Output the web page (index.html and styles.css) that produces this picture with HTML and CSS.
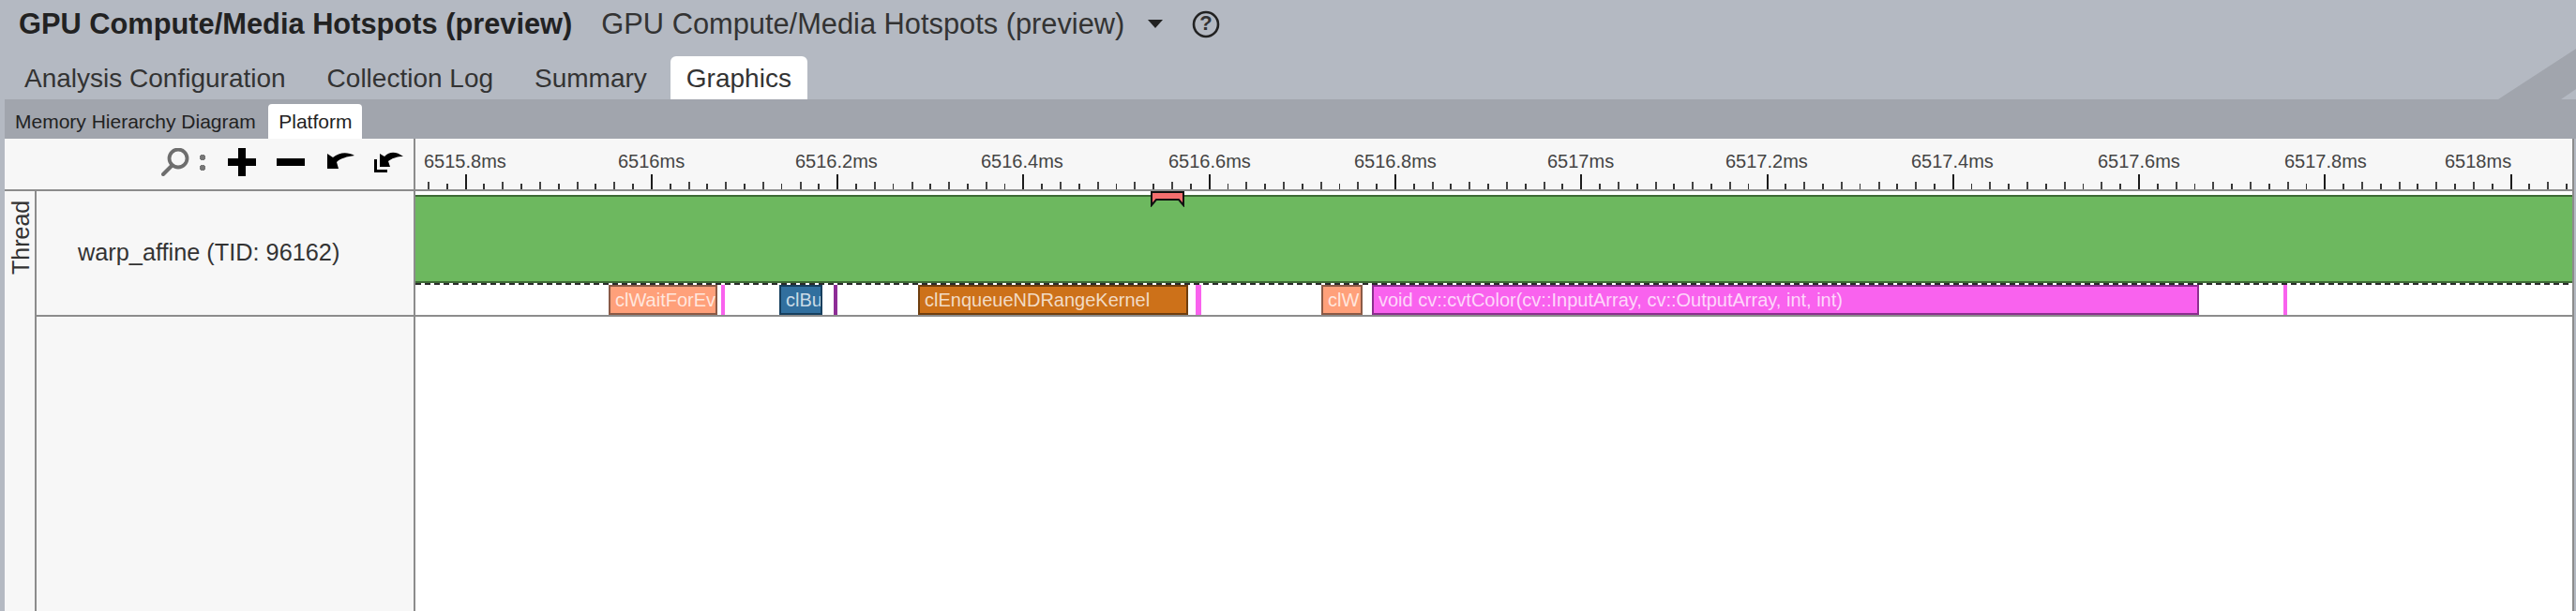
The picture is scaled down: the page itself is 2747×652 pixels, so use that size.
FILE: index.html
```html
<!DOCTYPE html>
<html lang="en">
<head>
    <meta charset="UTF-8">
    <title>GPU Compute/Media Hotspots (preview)</title>
    <link rel="stylesheet" href="styles.css">
</head>
<body>
    <header class="title-bar">
        <span class="title-main">GPU Compute/Media Hotspots (preview)</span>
        <span class="title-sub">GPU Compute/Media Hotspots (preview)</span>
        <svg class="caret" width="16" height="9" viewBox="0 0 16 9"><path d="M0 0H16L8 9Z"/></svg>
        <svg class="help" width="30" height="30" viewBox="0 0 30 30">
            <circle cx="15" cy="15" r="13" fill="none" stroke="#222" stroke-width="2.6"/>
            <text x="15" y="21" text-anchor="middle">?</text>
        </svg>
    </header>

    <nav class="main-tabs">
        <a class="main-tab">Analysis Configuration</a>
        <a class="main-tab">Collection Log</a>
        <a class="main-tab">Summary</a>
        <a class="main-tab active">Graphics</a>
        <svg class="corner" width="83" height="54" viewBox="0 0 83 54"><path d="M0 54L83 0V43L67 54Z"/></svg>
    </nav>

    <main class="workspace">
        <nav class="sub-tabs">
            <a class="sub-tab">Memory Hierarchy Diagram</a>
            <a class="sub-tab active">Platform</a>
        </nav>

        <div class="ruler-row">
            <div class="zoom-tools">
                <svg class="tool-search" width="30" height="30" viewBox="0 0 30 30">
                    <circle cx="18" cy="11" r="9.5" fill="none" stroke="#6e6e6e" stroke-width="3.8"/>
                    <path d="M11 19L2 28" stroke="#6e6e6e" stroke-width="4" stroke-linecap="round"/>
                </svg>
                <span class="tool-colon"></span>
                <svg class="tool-plus" width="30" height="30" viewBox="0 0 30 30"><path d="M11 0H19V11H30V19H19V30H11V19H0V11H11Z"/></svg>
                <svg class="tool-minus" width="30" height="10" viewBox="0 0 30 10"><path d="M0 1H30V9H0Z"/></svg>
                <svg class="tool-undo" width="29" height="18" viewBox="0 0 29 18"><path d="M0 2V18H12L10 11C14 7 21 5 29 4C22 0 13 0 6 6Z"/></svg>
                <svg class="tool-reset" width="31" height="22" viewBox="0 0 31 22"><path d="M6 2V16H17L15 10C19 7 24 5 31 5C24 0 17 -1 11 5Z"/><path d="M0 8H3V19H14V22H0Z"/></svg>
            </div>
            <div class="ruler">
                <span class="ruler-label" style="left: 9px">6515.8ms</span>
                <span class="ruler-label" style="left: 216px">6516ms</span>
                <span class="ruler-label" style="left: 405px">6516.2ms</span>
                <span class="ruler-label" style="left: 603px">6516.4ms</span>
                <span class="ruler-label" style="left: 803px">6516.6ms</span>
                <span class="ruler-label" style="left: 1001px">6516.8ms</span>
                <span class="ruler-label" style="left: 1207px">6517ms</span>
                <span class="ruler-label" style="left: 1397px">6517.2ms</span>
                <span class="ruler-label" style="left: 1595px">6517.4ms</span>
                <span class="ruler-label" style="left: 1794px">6517.6ms</span>
                <span class="ruler-label" style="left: 1993px">6517.8ms</span>
                <span class="ruler-label" style="left: 2164px">6518ms</span>
                <div class="ruler-ticks"></div>
            </div>
        </div>

        <div class="thread-area">
            <div class="group-label"><span>Thread</span></div>
            <div class="rows">
                <div class="thread-row">
                    <div class="thread-name">warp_affine (TID: 96162)</div>
                    <div class="timeline">
                        <svg class="marker" width="36" height="17" viewBox="0 0 36 17">
                            <path d="M1 1H35V15L30 9H6L1 15Z" fill="#f46f6f" stroke="#111" stroke-width="2"/>
                        </svg>
                        <div class="band"></div>
                        <div class="tasks">
                            <div class="task salmon" style="left: 206px; width: 116px">clWaitForEv</div>
                            <div class="tick-task pink" style="left: 326px; width: 4px"></div>
                            <div class="task blue" style="left: 388px; width: 46px">clBu</div>
                            <div class="tick-task purple" style="left: 446px; width: 4px"></div>
                            <div class="task orange" style="left: 536px; width: 288px">clEnqueueNDRangeKernel</div>
                            <div class="tick-task pink" style="left: 832px; width: 6px"></div>
                            <div class="task salmon" style="left: 966px; width: 44px">clW</div>
                            <div class="task magenta" style="left: 1020px; width: 882px">void cv::cvtColor(cv::InputArray, cv::OutputArray, int, int)</div>
                            <div class="tick-task pink" style="left: 1992px; width: 4px"></div>
                        </div>
                    </div>
                </div>
                <div class="empty-row">
                    <div class="empty-name"></div>
                    <div class="empty-timeline"></div>
                </div>
            </div>
        </div>
    </main>
</body>
</html>
```

FILE: styles.css
```css
html, body {
    height: 100%;
}
body {
    margin: 0;
    height: 652px;
    overflow: hidden;
    display: flex;
    flex-direction: column;
    background-color: #b4b9c2;
    font-family: "Liberation Sans", Arial, sans-serif;
    color: #2b2b2b;
}
.title-bar {
    height: 54px;
    box-sizing: border-box;
    display: flex;
    align-items: center;
    padding-left: 20px;
    padding-bottom: 3px;
}
.title-main {
    font-size: 30.8px;
    font-weight: bold;
    color: #222;
}
.title-sub {
    font-size: 30.8px;
    margin-left: 31px;
    color: #333;
}
.caret {
    margin-left: 25px;
    fill: #222;
}
.help {
    margin-left: 31px;
}
.help text {
    font-size: 22px;
    font-weight: bold;
    fill: #333;
}
.main-tabs {
    position: relative;
    height: 52px;
    display: flex;
    align-items: flex-end;
    gap: 10px;
    padding-left: 9px;
}
.main-tab {
    height: 46px;
    line-height: 48px;
    padding: 0 17px;
    font-size: 28px;
    border-radius: 6px 6px 0 0;
    color: #333;
}
.main-tab.active {
    margin-left: -2px;
    background-color: #fff;
}
.corner {
    position: absolute;
    right: 0;
    bottom: 0;
    fill: #a1a5ad;
}
.workspace {
    flex: 1;
    display: flex;
    flex-direction: column;
    margin-left: 5px;
    margin-right: 2px;
    min-height: 0;
}
.sub-tabs {
    height: 42px;
    display: flex;
    align-items: flex-end;
    gap: 2.5px;
    background-color: #a1a5ad;
    margin-right: -2px;
}
.sub-tab {
    height: 37px;
    line-height: 38px;
    padding: 0 11px;
    font-size: 21px;
    border-radius: 4px 4px 0 0;
    color: #222;
}
.sub-tab.active {
    background-color: #fff;
}
.ruler-row {
    height: 56px;
    display: flex;
    background-color: #f7f7f7;
    border-right: 2px solid #8c8c8c;
}
.zoom-tools {
    width: 438px;
    box-sizing: border-box;
    display: flex;
    align-items: center;
    justify-content: flex-end;
    padding-right: 11px;
    padding-bottom: 4px;
    border-bottom: 2px solid #8c8c8c;
    border-right: 2px solid #8c8c8c;
}
.tool-search {
    margin-right: 11px;
}
.tool-colon {
    width: 6px;
    height: 17px;
    margin-right: 24px;
    background: radial-gradient(circle, #777 3px, transparent 3.5px) 0 0 / 6px 6px no-repeat,
                radial-gradient(circle, #777 3px, transparent 3.5px) 0 11px / 6px 6px no-repeat;
}
.tool-minus {
    margin-left: 22px;
}
.tool-undo {
    margin-left: 24px;
    margin-bottom: 4px;
}
.tool-reset {
    margin-left: 21px;
}
.ruler {
    flex: 1;
    position: relative;
    border-bottom: 2px solid #8c8c8c;
}
.ruler-label {
    position: absolute;
    top: 12px;
    font-size: 20px;
    line-height: 24px;
    color: #444;
}
.ruler-ticks {
    position: absolute;
    left: 13px;
    right: 4px;
    bottom: 0;
    height: 16px;
    background:
        repeating-linear-gradient(90deg, transparent 0 39.65px, #1c1c1c 39.65px 41.65px, transparent 41.65px 198.27px) 0 100% / 100% 16px no-repeat,
        repeating-linear-gradient(90deg, #444 0 2px, transparent 2px 39.654px) 0 100% / 100% 8px no-repeat,
        repeating-linear-gradient(90deg, transparent 0 19.83px, #333 19.83px 21.6px, transparent 21.6px 39.654px) 0 100% / 100% 6px no-repeat;
}
.thread-area {
    flex: 1;
    display: flex;
    min-height: 0;
    background-color: #f7f7f7;
}
.group-label {
    width: 32px;
    flex-shrink: 0;
    border-right: 2px solid #8c8c8c;
    display: flex;
    justify-content: center;
    padding-top: 9px;
}
.group-label span {
    writing-mode: vertical-rl;
    transform: rotate(180deg);
    margin-left: 2px;
    font-size: 25px;
    line-height: 32px;
    color: #333;
    height: 80px;
}
.rows {
    flex: 1;
    display: flex;
    flex-direction: column;
    min-width: 0;
}
.thread-row {
    height: 132px;
    display: flex;
    border-bottom: 2px solid #8c8c8c;
}
.thread-name {
    width: 404px;
    flex-shrink: 0;
    box-sizing: border-box;
    padding-left: 44px;
    padding-bottom: 2px;
    display: flex;
    align-items: center;
    font-size: 25.3px;
    color: #333;
    border-right: 2px solid #8c8c8c;
}
.timeline {
    flex: 1;
    position: relative;
    background-color: #fff;
    padding-top: 4px;
    display: flex;
    flex-direction: column;
    border-right: 2px solid #8c8c8c;
}
.marker {
    position: absolute;
    left: 784px;
    top: 0;
    z-index: 2;
}
.band {
    height: 94px;
    flex-shrink: 0;
    box-sizing: border-box;
    background-color: #6db85f;
    border-top: 2px solid #3d6b35;
    border-bottom: 2px solid #3d6b35;
}
.tasks {
    flex: 1;
    position: relative;
    background: repeating-linear-gradient(90deg, #2c2c2c 0 6px, #fff 6px 10px) 0 0 / 100% 2px no-repeat;
}
.task {
    position: absolute;
    top: 2px;
    bottom: 0;
    box-sizing: border-box;
    padding-left: 5px;
    border-width: 2px;
    border-style: solid;
    overflow: hidden;
    white-space: nowrap;
    font-size: 20px;
    line-height: 28px;
    color: rgba(255, 255, 255, 0.75);
}
.tick-task {
    position: absolute;
    top: 2px;
    bottom: 0;
}
.salmon {
    background-color: #ffa07a;
    border-color: #8b5a46;
}
.blue {
    background-color: #316f9e;
    border-color: #163f5e;
}
.orange {
    background-color: #cd7119;
    border-color: #6f3e0e;
}
.magenta {
    background-color: #f962ee;
    border-color: #8b2f8e;
}
.pink {
    background-color: #f962ee;
}
.purple {
    background-color: #8e2d96;
}
.empty-row {
    flex: 1;
    display: flex;
}
.empty-name {
    width: 404px;
    flex-shrink: 0;
    box-sizing: border-box;
    border-right: 2px solid #8c8c8c;
}
.empty-timeline {
    flex: 1;
    background-color: #fff;
    border-right: 2px solid #8c8c8c;
}
```
